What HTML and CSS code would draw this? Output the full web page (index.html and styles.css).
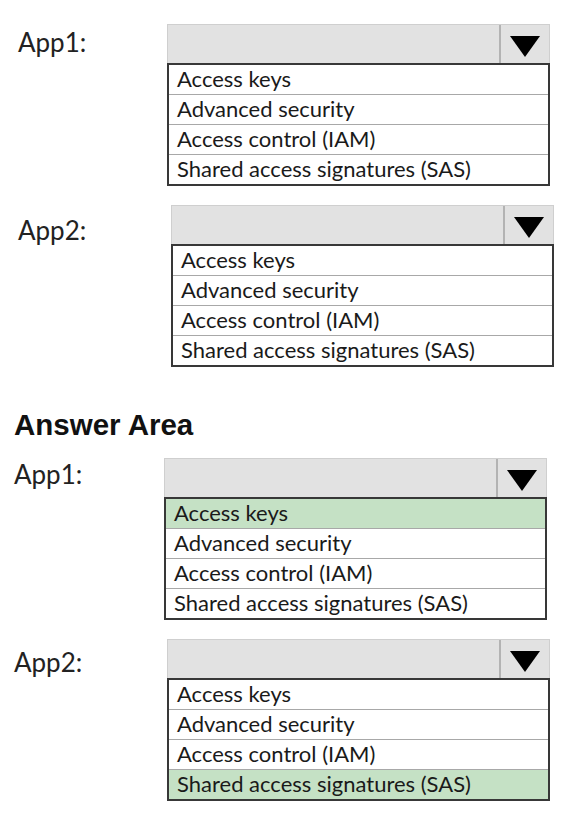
FILE: index.html
```html
<!DOCTYPE html>
<html lang="en">
<head>
<meta charset="utf-8">
<title>Answer Area</title>
<link rel="stylesheet" href="styles.css">
</head>
<body>
<div class="page">
  <section class="block block-1">
    <div class="label">App1:</div>
    <div class="dropdown">
      <div class="bar">
        <div class="field"></div>
        <div class="btn"><svg width="30" height="21" viewBox="0 0 30 21"><polygon points="0,0 30,0 15,21" fill="#000"/></svg></div>
      </div>
      <ul class="list">
        <li>Access keys</li>
        <li>Advanced security</li>
        <li>Access control (IAM)</li>
        <li>Shared access signatures (SAS)</li>
      </ul>
    </div>
  </section>

  <section class="block block-2">
    <div class="label">App2:</div>
    <div class="dropdown">
      <div class="bar">
        <div class="field"></div>
        <div class="btn"><svg width="30" height="21" viewBox="0 0 30 21"><polygon points="0,0 30,0 15,21" fill="#000"/></svg></div>
      </div>
      <ul class="list">
        <li>Access keys</li>
        <li>Advanced security</li>
        <li>Access control (IAM)</li>
        <li>Shared access signatures (SAS)</li>
      </ul>
    </div>
  </section>

  <h2 class="heading">Answer Area</h2>

  <section class="block block-3">
    <div class="label">App1:</div>
    <div class="dropdown">
      <div class="bar">
        <div class="field"></div>
        <div class="btn"><svg width="30" height="21" viewBox="0 0 30 21"><polygon points="0,0 30,0 15,21" fill="#000"/></svg></div>
      </div>
      <ul class="list">
        <li class="selected">Access keys</li>
        <li>Advanced security</li>
        <li>Access control (IAM)</li>
        <li>Shared access signatures (SAS)</li>
      </ul>
    </div>
  </section>

  <section class="block block-4">
    <div class="label">App2:</div>
    <div class="dropdown">
      <div class="bar">
        <div class="field"></div>
        <div class="btn"><svg width="30" height="21" viewBox="0 0 30 21"><polygon points="0,0 30,0 15,21" fill="#000"/></svg></div>
      </div>
      <ul class="list">
        <li>Access keys</li>
        <li>Advanced security</li>
        <li>Access control (IAM)</li>
        <li class="selected">Shared access signatures (SAS)</li>
      </ul>
    </div>
  </section>
</div>
</body>
</html>
```

FILE: styles.css
```css
* { box-sizing: border-box; }

body {
  margin: 0;
  background: #ffffff;
  color: #1c1c1c;
  font-family: Lato, "Liberation Sans", Arial, sans-serif;
}

.page {
  padding-top: 24px;
  display: flex;
  flex-direction: column;
}

.block {
  display: flex;
  align-items: flex-start;
}

.label {
  font-size: 26px;
  line-height: 30px;
  padding-top: 3px;
  color: #222;
}

.block-1 { padding-left: 18px; }
.block-1 .label { width: 149px; }

.block-2 { padding-left: 18px; margin-top: 19px; }
.block-2 .label { width: 153px; padding-top: 10px; }

.block-3 { padding-left: 14px; margin-top: 17px; }
.block-3 .label { width: 150px; padding-top: 1px; }

.block-4 { padding-left: 14px; margin-top: 19px; }
.block-4 .label { width: 153px; padding-top: 8px; }

.heading {
  margin: 42px 0 0 14px;
  font-family: "Liberation Sans", Arial, sans-serif;
  font-weight: bold;
  font-size: 29.5px;
  line-height: 32px;
  color: #111;
}

.dropdown {
  width: 383px;
  display: flex;
  flex-direction: column;
}

.bar {
  height: 39px;
  display: flex;
  background: #e2e2e2;
  border: 1px solid #cfcfcf;
  border-bottom: none;
}

.field { flex: 1; }

.btn {
  width: 50px;
  border-left: 2px solid #b3b3b3;
  display: flex;
  justify-content: center;
  align-items: center;
  padding-top: 4px;
}

.list {
  list-style: none;
  margin: 0;
  padding: 0;
  border: 2px solid #383838;
}

.list li {
  height: 29px;
  line-height: 28px;
  padding-left: 8px;
  font-size: 22px;
  color: #1a1a1a;
  white-space: nowrap;
}

.list li + li {
  height: 30px;
  border-top: 1px solid #a8a8a8;
}

.list li.selected {
  background: #c5e1c5;
}
```
